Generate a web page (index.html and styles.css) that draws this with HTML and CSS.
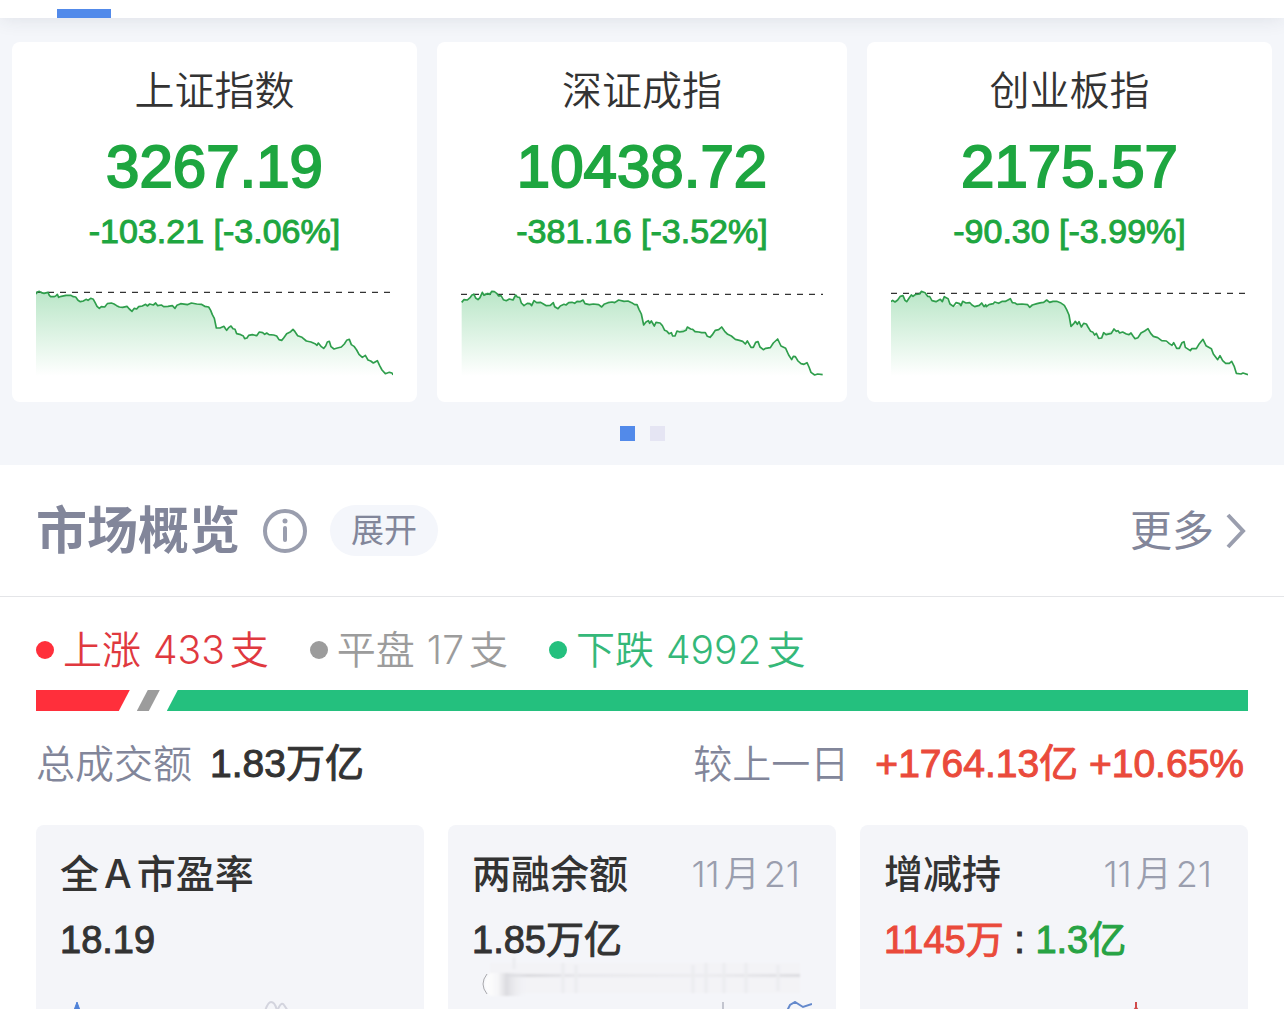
FILE: index.html
```html
<!DOCTYPE html>
<html lang="zh-CN">

<head>
    <meta charset="UTF-8">
    <meta name="viewport" content="width=device-width, initial-scale=1">
    <title>市场概览</title>
    <link rel="stylesheet" href="styles.css">
</head>

<body>
    <header class="tab-bar">
        <div class="tab-line"></div>
    </header>

    <section class="indices">
        <div class="index-list">
            <article class="index-card">
                <h2 class="index-name">上证指数</h2>
                <p class="index-price">3267.19</p>
                <p class="index-change">-103.21 [-3.06%]</p>
                <svg class="index-chart" viewBox="48 36 1071 300" preserveAspectRatio="none">
                    <defs>
                        <linearGradient id="fade" gradientUnits="userSpaceOnUse" x1="0" y1="60" x2="0" y2="318">
                            <stop offset="0" stop-color="#b9e6c7" />
                            <stop offset="1" stop-color="#ffffff" />
                        </linearGradient>
                    </defs>
                    <path class="area" d="M48 68L84 67L92 80L112 78L150 77L165 83L180 95L212 85L222 92L238 115L260 108L270 100L300 111L320 110L336 123L355 110L375 104L407 102L425 109L455 108L466 115L480 102L520 100L550 104L568 111L583 145L589 174L612 170L620 180L633 169L650 192L677 205L690 195L710 195L720 187L772 197L781 211L800 192L820 179L835 195L870 216L893 224L911 234L927 216L942 237L965 231L986 209L998 229L1012 240L1026 262L1038 257L1045 269L1060 278L1072 273L1085 300L1096 311L1119 311V318H48Z" />
                    <path class="base" d="M48 67H1119" />
                    <path class="line" d="M48 72L52 66L58 64L64 68L72 70L84 67L88 76L92 80L102 80L107 78L112 73L116 82L124 79L138 76L152 76L160 80L167 81L174 91L181 95L190 93L198 88L204 91L212 85L220 88L225 97L231 109L238 115L244 110L254 111L262 101L274 99L282 102L290 107L298 111L308 112L321 109L328 117L336 124L343 115L350 117L356 110L367 108L377 103L382 108L389 102L400 105L407 99L413 107L424 105L431 110L444 109L457 107L465 115L471 106L482 101L502 104L514 99L530 102L544 103L554 109L566 111L572 121L577 134L583 145L589 174L600 174L612 169L617 177L620 181L627 172L633 168L639 176L645 178L650 191L662 194L670 198L674 206L681 204L686 196L697 194L710 197L718 186L728 188L734 193L740 189L747 194L761 195L770 198L777 209L785 211L791 204L800 191L812 185L819 178L825 185L833 197L846 202L859 213L873 216L885 221L891 226L895 219L904 230L911 235L917 228L922 216L928 214L933 230L942 237L952 234L964 231L973 222L980 211L988 208L994 224L1002 229L1010 240L1017 253L1027 262L1036 256L1044 270L1052 273L1060 279L1072 272L1079 287L1086 300L1096 311L1108 307L1116 309L1119 315" />
                </svg>
            </article>

            <article class="index-card">
                <h2 class="index-name">深证成指</h2>
                <p class="index-price">10438.72</p>
                <p class="index-change">-381.16 [-3.52%]</p>
                <svg class="index-chart" viewBox="63 36 1086 300" preserveAspectRatio="none">
                    <path class="area" d="M65 95L84 87L100 74L113 88L128 70L160 65L178 78L190 91L218 87L230 76L242 97L255 107L283 95L325 107L338 98L354 115L385 98L428 93L440 103L476 102L486 110L502 98L540 91L573 97L590 105L605 135L611 165L628 152L641 166L655 157L674 182L704 198L710 184L742 173L795 189L808 202L825 182L845 172L860 191L885 208L918 222L936 234L952 216L970 239L990 233L1013 209L1025 230L1037 238L1056 268L1066 260L1079 279L1101 280L1113 306L1125 314L1148 314V318H65Z" />
                    <path class="base" d="M63 73H1149" />
                    <path class="line" d="M65 97L72 89L82 90L91 82L96 75L102 73L107 84L114 89L120 83L127 67L132 76L142 71L150 73L155 64L163 65L171 71L176 78L183 77L190 89L199 92L208 87L219 90L227 75L232 81L239 83L244 99L252 107L262 100L270 101L275 107L282 92L290 98L301 97L309 101L319 107L331 106L340 98L344 110L354 116L361 108L372 103L378 105L386 98L396 97L404 100L411 94L420 95L429 90L435 101L448 104L460 102L476 104L485 111L492 103L504 98L516 96L524 98L536 90L552 94L564 93L575 98L584 104L591 104L597 118L604 132L611 165L618 156L625 152L629 160L634 153L643 168L648 157L660 159L667 167L674 181L681 184L687 191L694 188L698 198L705 198L711 183L719 186L731 184L738 181L742 171L752 177L758 178L765 185L776 186L785 188L796 188L802 199L810 202L818 193L826 181L836 179L845 171L854 184L863 193L874 198L886 208L898 211L908 214L916 222L922 213L933 232L940 232L947 217L954 215L960 231L970 239L977 235L991 233L1000 219L1013 207L1023 228L1037 235L1046 255L1055 269L1060 259L1066 260L1074 273L1083 281L1092 283L1101 278L1107 291L1113 307L1124 315L1133 312L1148 314" />
                </svg>
            </article>

            <article class="index-card">
                <h2 class="index-name">创业板指</h2>
                <p class="index-price">2175.57</p>
                <p class="index-change">-90.30 [-3.99%]</p>
                <svg class="index-chart" viewBox="63 36 1071 300" preserveAspectRatio="none">
                    <path class="area" d="M63 93L78 94L97 77L110 94L125 76L155 65L172 77L188 94L215 91L224 81L240 100L253 109L280 96L315 109L336 102L349 110L385 97L422 88L432 101L469 102L479 111L500 100L530 92L560 95L583 106L597 135L603 168L619 155L635 170L645 162L665 188L688 205L702 190L732 180L780 191L796 206L813 189L834 177L848 198L875 212L902 225L921 236L940 216L952 239L978 236L999 209L1012 230L1024 238L1043 268L1051 259L1064 279L1086 275L1098 308L1134 314V318H63Z" />
                    <path class="base" d="M63 70H1134" />
                    <path class="line" d="M63 95L68 91L75 96L83 90L91 79L99 77L105 91L110 95L119 82L124 75L129 79L137 73L149 72L154 64L165 68L173 79L179 80L186 92L198 95L211 88L217 95L223 80L234 86L240 102L250 109L258 98L269 101L273 107L278 94L288 99L299 98L306 105L314 110L328 106L335 99L342 110L347 104L349 110L357 104L370 101L374 96L386 100L397 94L407 94L421 86L427 98L435 99L441 103L456 102L473 104L479 112L487 105L501 101L514 98L521 97L530 90L539 97L549 94L560 94L571 98L583 106L590 119L597 135L603 169L611 161L616 154L622 163L627 155L634 171L641 160L649 162L654 171L662 184L669 187L674 195L679 190L686 205L695 204L701 188L708 194L724 190L732 177L739 184L744 182L749 189L758 186L769 192L777 194L783 189L789 198L795 206L804 203L813 189L824 183L834 176L842 190L850 199L863 203L875 212L889 213L898 221L906 226L911 218L920 235L928 235L936 218L942 215L946 232L961 242L965 236L979 236L988 221L999 208L1008 227L1024 236L1030 252L1043 269L1050 257L1058 272L1067 280L1078 280L1085 274L1093 290L1099 310L1113 312L1119 309L1134 314" />
                </svg>
            </article>
        </div>
        <div class="pager">
            <span class="pager-dot active"></span>
            <span class="pager-dot"></span>
        </div>
    </section>

    <main class="overview">
        <div class="overview-head">
            <h1 class="overview-title">市场概览</h1>
            <button class="info-btn" type="button" aria-label="说明">
                <svg class="info-icon" viewBox="0 0 46 46">
                    <circle cx="23" cy="23" r="20" fill="none" stroke="#9a9eae" stroke-width="4" />
                    <circle cx="23" cy="13" r="2.5" fill="#9a9eae" />
                    <path d="M23 20V32" fill="none" stroke="#9a9eae" stroke-width="4" stroke-linecap="round" />
                </svg>
            </button>
            <button class="expand-btn" type="button">展开</button>
            <a class="more" href="#">更多
                <svg class="more-icon" viewBox="0 0 20 38">
                    <path d="M2 3L17 19L2 35" fill="none" stroke="#9a9eae" stroke-width="4" />
                </svg>
            </a>
        </div>

        <div class="overview-body">
            <div class="legend">
                <span class="legend-item up"><i class="dot"></i>上涨<span class="count">433</span>支</span>
                <span class="legend-item flat"><i class="dot"></i>平盘<span class="count">17</span>支</span>
                <span class="legend-item down"><i class="dot"></i>下跌<span class="count">4992</span>支</span>
            </div>

            <div class="ratio">
                <div class="ratio-up" style="flex-grow: 433"></div>
                <div class="ratio-flat"></div>
                <div class="ratio-down" style="flex-grow: 4992"></div>
            </div>

            <div class="turnover">
                <div class="turnover-item">
                    <span class="turnover-label">总成交额</span>
                    <span class="turnover-value">1.83万亿</span>
                </div>
                <div class="turnover-item prev">
                    <span class="turnover-label">较上一日</span>
                    <span class="turnover-value rise">+1764.13亿 +10.65%</span>
                </div>
            </div>

            <div class="stats">
                <article class="stat">
                    <div class="stat-head">
                        <h3 class="stat-name">全<span class="latin">A</span>市盈率</h3>
                    </div>
                    <p class="stat-value">18.19</p>
                    <svg class="stat-chart" viewBox="0 0 340 8" preserveAspectRatio="xMinYMin slice">
                        <path d="M13 12L17 1L21 12Z" fill="#4f82d8" stroke="#4f82d8" />
                        <path d="M205 10C207 4 209 1 211 1C214 1 216 5 217 10L219 6C221 2 223 2 224 4L228 10" fill="none" stroke="#d3d4de" stroke-width="2" />
                    </svg>
                </article>
                <article class="stat">
                    <div class="stat-head">
                        <h3 class="stat-name">两融余额</h3>
                        <time class="stat-date">11<span class="month">月</span>21</time>
                    </div>
                    <p class="stat-value">1.85万亿</p>
                    <svg class="smudge" viewBox="0 0 330 44">
                        <defs>
                            <linearGradient id="smear" x1="0" y1="0" x2="1" y2="0">
                                <stop offset="0" stop-color="#d0d0d4" />
                                <stop offset="0.3" stop-color="#e8e8ec" />
                                <stop offset="0.7" stop-color="#ececf0" />
                                <stop offset="1" stop-color="#dcdce0" />
                            </linearGradient>
                            <linearGradient id="glow" x1="0" y1="0" x2="1" y2="0">
                                <stop offset="0" stop-color="#ffffff" />
                                <stop offset="0.3" stop-color="#f6f6f8" />
                                <stop offset="0.5" stop-color="#dcdce0" />
                                <stop offset="1" stop-color="#f4f5f9" stop-opacity="0" />
                            </linearGradient>
                            <filter id="soft">
                                <feGaussianBlur stdDeviation="1" />
                            </filter>
                        </defs>
                        <g filter="url(#soft)">
                            <rect x="12" y="8" width="310" height="30" fill="#f3f3f6" />
                            <rect x="14" y="19" width="308" height="3" fill="url(#smear)" />
                            <path d="M12 18H50V41H12Q2 29 12 18Z" fill="url(#glow)" />
                            <path d="M36 2V14M85 8V38M98 10V38M215 10V38M228 8V38M246 8V38M268 8V38M300 10V36" stroke="#ebecef" stroke-width="3" />
                        </g>
                        <path d="M9 19Q1 29 9 39" fill="none" stroke="#a9a9ad" />
                    </svg>
                    <svg class="stat-chart" viewBox="0 0 340 8" preserveAspectRatio="xMinYMin slice">
                        <path d="M251 1V10" stroke="#c3c5cf" stroke-width="2" />
                        <path d="M315 10L318 4L323 1L331 6L340 3" fill="none" stroke="#6489cc" stroke-width="2" />
                    </svg>
                </article>
                <article class="stat">
                    <div class="stat-head">
                        <h3 class="stat-name">增减持</h3>
                        <time class="stat-date">11<span class="month">月</span>21</time>
                    </div>
                    <p class="stat-value"><span class="rise">1145万</span> : <span class="fall">1.3亿</span></p>
                    <svg class="stat-chart" viewBox="0 0 340 8" preserveAspectRatio="xMinYMin slice">
                        <path d="M252 1V10" stroke="#d04a4a" stroke-width="2" />
                        <path d="M249 9L252 5L255 9Z" fill="#d04a4a" />
                    </svg>
                </article>
            </div>
        </div>
    </main>
</body>

</html>
```

FILE: styles.css
```css
* {
    box-sizing: border-box;
}

body {
    margin: 0;
    background: #fff;
    color: #333;
    font-family: Inter, "Noto Sans CJK SC", sans-serif;
}

h1,
h2,
h3,
p {
    margin: 0;
    font-weight: normal;
}

svg {
    display: block;
}

button {
    border: none;
    padding: 0;
    background: none;
    font-family: inherit;
    cursor: pointer;
}

/* tabs */
.tab-bar {
    position: relative;
    display: flex;
    align-items: flex-end;
    height: 18px;
    padding-left: 57px;
    background: #fff;
    box-shadow: 0 0 20px rgba(40, 50, 70, 0.12);
}

.tab-line {
    width: 54px;
    height: 9px;
    background: #528aea;
}

/* index cards */
.indices {
    padding: 24px 12px;
    background: #f4f6fa;
}

.index-list {
    display: grid;
    grid-template-columns: 81fr 82fr 81fr;
    gap: 20px;
}

.index-card {
    padding: 20px 24px;
    border-radius: 8px;
    background: #fff;
    text-align: center;
}

.index-name {
    font-size: 40px;
    font-weight: 350;
    line-height: 58px;
}

.index-price,
.index-change {
    color: #1ea640;
    font-family: "Liberation Sans", Arial, sans-serif;
    -webkit-text-stroke: 1px currentColor;
}

.index-price {
    font-size: 60px;
    line-height: 94px;
    -webkit-text-stroke-width: 2px;
}

.index-change {
    font-size: 34px;
    line-height: 34px;
}

.index-chart {
    width: 100%;
    height: 100px;
    margin-top: 34px;
}

.area {
    fill: url(#fade);
}

.base {
    fill: none;
    stroke: #333;
    stroke-width: 4;
    stroke-dasharray: 18 18;
}

.line {
    fill: none;
    stroke: #2f9e4c;
    stroke-width: 5;
    stroke-linejoin: round;
}

.pager {
    display: flex;
    justify-content: center;
    gap: 15px;
    margin-top: 24px;
}

.pager-dot {
    width: 15px;
    height: 15px;
    background: #e5e5f3;
}

.pager-dot.active {
    background: #528aea;
}

/* market overview */
.overview-head {
    display: flex;
    align-items: center;
    height: 132px;
    padding: 0 38px 0 36px;
    border-bottom: 1px solid #e4e5e8;
}

.overview-title {
    color: #82869a;
    font-size: 51px;
    font-weight: bold;
    line-height: 60px;
}

.info-btn {
    margin-left: 22px;
}

.info-icon {
    width: 46px;
    height: 46px;
}

.expand-btn {
    height: 51px;
    margin-left: 22px;
    padding: 0 21px;
    border-radius: 26px;
    background: #f4f6fb;
    color: #82869a;
    font-size: 33px;
    line-height: 51px;
}

.more {
    display: flex;
    align-items: center;
    gap: 12px;
    margin-left: auto;
    color: #82869a;
    font-size: 42px;
    line-height: 60px;
    text-decoration: none;
}

.more-icon {
    width: 20px;
    height: 38px;
}

.overview-body {
    padding: 24px 36px 0;
}

.legend {
    display: flex;
    gap: 41px;
    font-size: 39px;
    font-weight: 350;
    line-height: 58px;
}

.legend-item {
    display: flex;
    align-items: center;
}

.dot {
    width: 18px;
    height: 18px;
    margin-right: 9px;
    border-radius: 50%;
}

.count {
    margin: 0 5px 0 12px;
}

.up {
    color: #e0393f;
}

.flat {
    color: #9c9c9c;
}

.down {
    color: #35b879;
}

.up .dot,
.ratio-up {
    background: #ff2f3b;
}

.flat .dot,
.ratio-flat {
    background: #9c9c9c;
}

.down .dot,
.ratio-down {
    background: #24c07e;
}

.ratio {
    display: flex;
    gap: 7px;
    height: 21px;
    margin-top: 11px;
}

.ratio-up {
    flex-basis: 0;
    clip-path: polygon(0 0, 100% 0, calc(100% - 11px) 100%, 0 100%);
}

.ratio-flat {
    flex: 0 0 23px;
    clip-path: polygon(11px 0, 100% 0, calc(100% - 11px) 100%, 0 100%);
}

.ratio-down {
    flex-basis: 0;
    clip-path: polygon(11px 0, 100% 0, 100% 100%, 0 100%);
}

.turnover {
    display: flex;
    justify-content: space-between;
    margin-top: 24px;
    padding-right: 4px;
    font-size: 39px;
    line-height: 58px;
}

.turnover-item {
    display: flex;
    align-items: center;
    gap: 18px;
}

.turnover-item.prev {
    gap: 26px;
}

.turnover-label {
    color: #82869a;
    font-weight: 350;
}

.turnover-value,
.stat-value {
    font-family: "Liberation Sans", "Noto Sans CJK SC", sans-serif;
    -webkit-text-stroke: 1px currentColor;
}

.rise {
    color: #ea4a3b;
}

.fall {
    color: #27a344;
}

.stats {
    display: grid;
    grid-template-columns: repeat(3, 1fr);
    gap: 24px;
    margin-top: 32px;
}

.stat {
    position: relative;
    padding: 20px 24px 0;
    border-radius: 8px 8px 0 0;
    background: #f4f5f9;
}

.stat-head {
    display: flex;
    align-items: center;
    justify-content: space-between;
    padding-right: 12px;
}

.stat-name {
    font-size: 39px;
    font-weight: 500;
    line-height: 58px;
}

.latin {
    margin: 0 5px;
}

.stat-date {
    color: #9a9eae;
    font-size: 36px;
    font-weight: 350;
    line-height: 54px;
}

.month {
    margin: 0 4px;
}

.stat-value {
    margin-top: 8px;
    font-size: 38px;
    line-height: 58px;
}

/* faded strip over the value */
.smudge {
    position: absolute;
    top: 130px;
    left: 30px;
    width: 330px;
    height: 44px;
}

.stat-chart {
    width: 100%;
    height: 8px;
    margin-top: 32px;
}
```
